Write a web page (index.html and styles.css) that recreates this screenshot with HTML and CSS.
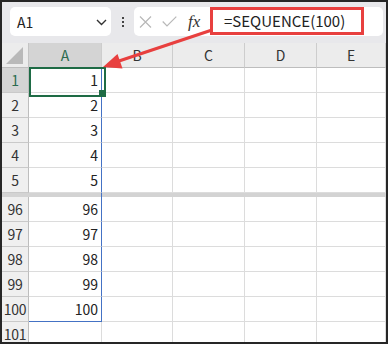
FILE: index.html
```html
<!DOCTYPE html>
<html lang="ja">
<head>
    <meta charset="UTF-8">
    <meta name="viewport" content="width=device-width, initial-scale=1.0">
    <title>SEQUENCE</title>
    <link rel="stylesheet" href="styles.css">
</head>
<body>

<div class="frame">
    <div class="toolbar">
        <div class="namebox">
            <span>A1</span>
            <svg class="chevron" width="11" height="7" viewBox="0 0 11 7"><polyline points="1,1 5.5,5.5 10,1" fill="none" stroke="#333" stroke-width="1.4"/></svg>
        </div>
        <div class="vdots"><i></i><i></i><i></i></div>
        <div class="formulabox">
            <svg class="icon-x" width="13" height="12" viewBox="0 0 13 12"><path d="M1 0.5 L12 11.5 M12 0.5 L1 11.5" stroke="#b8b8b8" stroke-width="1.2" fill="none"/></svg>
            <svg class="icon-ok" width="15" height="11" viewBox="0 0 15 11"><polyline points="0.7,5.5 5,10 14.3,0.6" fill="none" stroke="#b8b8b8" stroke-width="1.2"/></svg>
            <span class="fx">fx</span>
            <div class="formula">=SEQUENCE(100)</div>
        </div>
    </div>

    <div class="sheet">
        <div class="corner"><svg width="18" height="18" viewBox="0 0 18 18"><polygon points="0,17 17,17 17,0" fill="#b9b9b9"/></svg></div>
        <div class="ch sel">A</div><div class="ch">B</div><div class="ch">C</div><div class="ch">D</div><div class="ch">E</div>

        <div class="rh sel">1</div><div class="c a active">1</div><div class="c"></div><div class="c"></div><div class="c"></div><div class="c"></div>
        <div class="rh">2</div><div class="c a">2</div><div class="c"></div><div class="c"></div><div class="c"></div><div class="c"></div>
        <div class="rh">3</div><div class="c a">3</div><div class="c"></div><div class="c"></div><div class="c"></div><div class="c"></div>
        <div class="rh">4</div><div class="c a">4</div><div class="c"></div><div class="c"></div><div class="c"></div><div class="c"></div>
        <div class="rh">5</div><div class="c a">5</div><div class="c"></div><div class="c"></div><div class="c"></div><div class="c"></div>

        <div class="split"></div><div class="split a"></div><div class="split"></div><div class="split"></div><div class="split"></div><div class="split"></div>

        <div class="rh">96</div><div class="c a">96</div><div class="c"></div><div class="c"></div><div class="c"></div><div class="c"></div>
        <div class="rh">97</div><div class="c a">97</div><div class="c"></div><div class="c"></div><div class="c"></div><div class="c"></div>
        <div class="rh">98</div><div class="c a">98</div><div class="c"></div><div class="c"></div><div class="c"></div><div class="c"></div>
        <div class="rh">99</div><div class="c a">99</div><div class="c"></div><div class="c"></div><div class="c"></div><div class="c"></div>
        <div class="rh">100</div><div class="c a last">100</div><div class="c"></div><div class="c"></div><div class="c"></div><div class="c"></div>
        <div class="rh">101</div><div class="c"></div><div class="c"></div><div class="c"></div><div class="c"></div><div class="c"></div>
    </div>

    <!-- annotation arrow -->
    <svg class="arrow" width="388" height="344" viewBox="0 0 388 344">
        <line x1="212" y1="30" x2="116" y2="62" stroke="#e8403f" stroke-width="3"/>
        <polygon points="103,67 122.5,68.5 117.5,54" fill="#e8403f"/>
    </svg>
</div>

</body>
</html>
```

FILE: styles.css
```css
* {
    box-sizing: border-box;
}
body {
    margin: 0;
    font-family: "Noto Sans CJK JP", "Noto Sans", sans-serif;
    color: #222;
}
.frame {
    position: relative;
    width: 388px;
    height: 344px;
    border: 2px solid #262626;
    overflow: hidden;
    background-color: #ffffff;
}

/* toolbar */
.toolbar {
    display: flex;
    align-items: flex-start;
    height: 41px;
    padding: 5px 3px 0 8px;
    background-color: #e8e8eb;
}
.namebox {
    display: flex;
    align-items: center;
    justify-content: space-between;
    width: 101px;
    height: 29px;
    padding: 0 4px 0 7px;
    background-color: #ffffff;
    border-radius: 5px;
    font-size: 14px;
}
.chevron {
    margin-top: 1px;
}
.vdots {
    display: flex;
    flex-direction: column;
    gap: 2px;
    width: 23px;
    height: 29px;
    align-items: center;
    justify-content: center;
}
.vdots i {
    display: block;
    width: 2px;
    height: 2px;
    background-color: #444;
}
.formulabox {
    display: flex;
    align-items: center;
    flex: 1;
    height: 29px;
    padding-left: 5px;
    background-color: #ffffff;
    border-radius: 5px;
}
.icon-x {
    margin-right: 10px;
}
.icon-ok {
    margin-right: 11px;
}
.fx {
    width: 14px;
    margin-right: 8px;
    font-family: "Liberation Serif", serif;
    font-style: italic;
    font-size: 17px;
    color: #333;
    line-height: 1;
}
.formula {
    align-self: flex-start;
    width: 154px;
    height: 28px;
    padding-left: 11px;
    border: 3px solid #e8403f;
    font-size: 15px;
    line-height: 22px;
    color: #222;
}

/* sheet */
.sheet {
    display: grid;
    grid-template-columns: 27px 73px 71px 72px 72px 1fr;
    grid-template-rows: repeat(6, 25px) 4px repeat(6, 25px);
    font-size: 14px;
}
.corner {
    display: flex;
    align-items: center;
    justify-content: center;
    padding: 1px 0 0 0;
    background-color: #ececec;
    border-right: 1px solid #c4c4c4;
    border-bottom: 1px solid #bdbdbd;
}
.ch {
    text-align: center;
    line-height: 24px;
    background-color: #ececec;
    border-right: 1px solid #cdcdcd;
    border-bottom: 1px solid #bdbdbd;
    color: #333;
}
.rh {
    text-align: center;
    line-height: 24px;
    background-color: #efefef;
    border-right: 1px solid #bdbdbd;
    border-bottom: 1px solid #c9c9c9;
    color: #333;
    letter-spacing: -0.3px;
}
.ch.sel, .rh.sel {
    background-color: #d4d4d4;
    color: #2a6b4f;
}
.c {
    text-align: right;
    padding-right: 3px;
    line-height: 24px;
    border-right: 1px solid #dcdcdc;
    border-bottom: 1px solid #dcdcdc;
}
.c.a {
    border-right-color: #4472c4;
}
.c.last {
    border-bottom-color: #4472c4;
}
.split {
    background-color: #d3d3d3;
}
.split.a {
    border-right: 1px solid #4472c4;
}

/* active cell */
.active {
    position: relative;
}
.active::after {
    content: "";
    position: absolute;
    left: 0;
    top: -1px;
    width: 73px;
    height: 26px;
    border: 2px solid #1e6b45;
}
.active::before {
    content: "";
    position: absolute;
    left: 70px;
    top: 22px;
    width: 5px;
    height: 5px;
    background-color: #1e6b45;
    z-index: 1;
}

.arrow {
    position: absolute;
    top: -2px;
    left: -2px;
    pointer-events: none;
}
```
